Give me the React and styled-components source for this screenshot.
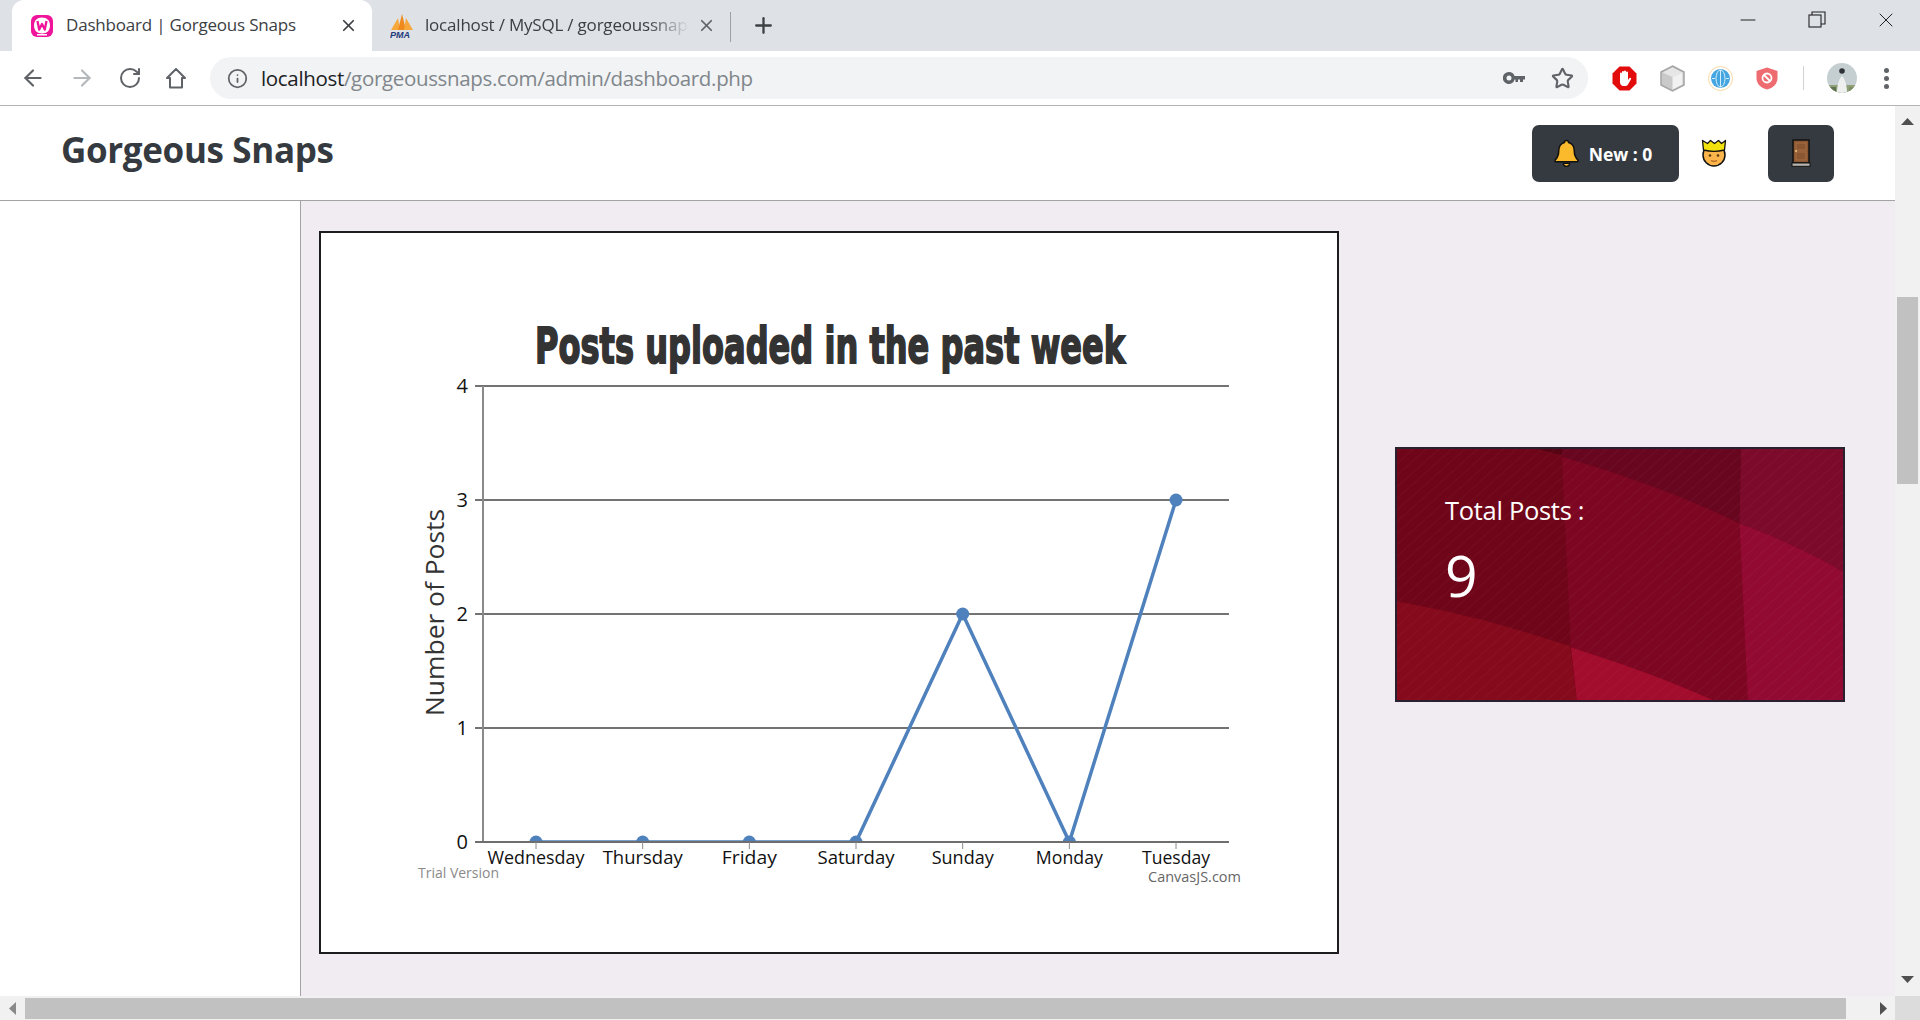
import React from "react";
import styled, { createGlobalStyle } from "styled-components";
import { ArrowLeft, ArrowRight, RotateCw, Info, Star, X, Plus, Minus } from "lucide-react";

const GlobalStyle = createGlobalStyle`
  html, body {
    margin: 0;
    padding: 0;
    height: 100%;
    overflow: hidden;
    font-family: "Open Sans", "Noto Sans", sans-serif;
  }
  * {
    box-sizing: border-box;
  }
`;

const Window = styled.div`
  width: 1920px;
  height: 1020px;
  display: flex;
  flex-direction: column;
  background: #ffffff;
  overflow: hidden;
`;

const TabStrip = styled.div`
  height: 51px;
  flex: none;
  display: flex;
  align-items: stretch;
  padding-left: 12px;
  background: #dee1e6;
`;

const ActiveTab = styled.div`
  width: 360px;
  display: flex;
  align-items: center;
  padding: 0 14px 0 18px;
  background: #ffffff;
  border-radius: 12px 12px 0 0;
`;

const Tab = styled.div`
  width: 358px;
  display: flex;
  align-items: center;
  padding: 0 14px 0 18px;
  position: relative;
`;

const TabTitle = styled.span`
  flex: 1;
  margin: -2px 0 0 ${(p) => (p.$faded ? 11 : 12)}px;
  font-size: 17px;
  letter-spacing: -0.2px;
  color: #3c4043;
  white-space: nowrap;
  overflow: hidden;
  ${(p) => p.$faded && "mask-image: linear-gradient(90deg, #000 82%, transparent 97%);"}
`;

const TabDivider = styled.div`
  width: 1px;
  height: 30px;
  margin-top: 12px;
  background: #9aa0a6;
`;

const NewTab = styled.div`
  width: 64px;
  display: flex;
  align-items: center;
  justify-content: center;
  color: #3c4043;
`;

const WindowControls = styled.div`
  margin-left: auto;
  display: flex;
  align-items: center;
  gap: 45px;
  padding: 0 22px 11px 0;
  color: #222222;
`;

const Toolbar = styled.div`
  height: 55px;
  flex: none;
  display: flex;
  align-items: center;
  border-bottom: 1px solid #b4b4b4;
  background: #ffffff;
`;

const NavIcons = styled.div`
  width: 210px;
  flex: none;
  display: flex;
  align-items: center;
  gap: 23px;
  padding-left: 20px;
  color: #5f6368;
`;

const UrlPill = styled.div`
  width: 1378px;
  height: 42px;
  flex: none;
  display: flex;
  align-items: center;
  padding: 0 14px 0 17px;
  border-radius: 21px;
  background: #f1f3f4;
  color: #5f6368;
`;

const UrlText = styled.span`
  flex: 1;
  margin-left: 13px;
  font-size: 20.5px;
  letter-spacing: -0.33px;
  color: #80868b;
  white-space: nowrap;
`;

const UrlHost = styled.span`
  color: #202124;
`;

const PillActions = styled.div`
  display: flex;
  align-items: center;
  gap: 26px;
`;

const Extensions = styled.div`
  flex: 1;
  display: flex;
  align-items: center;
  gap: 23px;
  padding-left: 24px;
`;

const ExtDivider = styled.div`
  width: 1px;
  height: 24px;
  margin-left: 2px;
  background: #d0d2d6;
`;

const Kebab = styled.div`
  display: flex;
  flex-direction: column;
  gap: 3px;
  margin-left: 4px;

  i {
    width: 5px;
    height: 5px;
    border-radius: 50%;
    background: #5f6368;
  }
`;

const Viewport = styled.div`
  flex: 1;
  min-height: 0;
  display: grid;
  grid-template-columns: 1895px 25px;
  grid-template-rows: 890px 24px;
`;

const Page = styled.div`
  display: flex;
  flex-direction: column;
  background: #f0ecf2;
  overflow: hidden;
`;

const SiteHeader = styled.header`
  height: 95px;
  flex: none;
  display: flex;
  align-items: center;
  padding: 0 61px 0 61px;
  background: #ffffff;
  border-bottom: 1px solid #a3a3a3;
`;

const Brand = styled.div`
  flex: 1;
  font-size: 35px;
  font-weight: 700;
  letter-spacing: -0.35px;
  color: #343a40;
  margin-top: -8px;
`;

const DarkButton = styled.div`
  height: 57px;
  display: flex;
  align-items: center;
  justify-content: center;
  gap: 10px;
  width: ${(p) => p.$width}px;
  padding-right: ${(p) => p.$nudge || 0}px;
  border-radius: 7px;
  background: #343a40;
  color: #ffffff;
  font-size: 17.5px;
  font-weight: 700;
`;

const NewLabel = styled.span`
  margin-top: 2px;
`;

const UserFace = styled.div`
  display: flex;
  margin: 0 41px 0 22px;
`;

const Body = styled.div`
  flex: 1;
  display: flex;
  min-height: 0;
`;

const Sidebar = styled.aside`
  width: 301px;
  flex: none;
  background: #ffffff;
  border-right: 1px solid #a3a3a3;
`;

const Content = styled.main`
  flex: 1;
  display: flex;
  align-items: flex-start;
  padding: 30px 0 0 18px;
  gap: 56px;
`;

const ChartCard = styled.section`
  width: 1020px;
  height: 723px;
  flex: none;
  padding-left: 1px;
  background: #ffffff;
  border: 2px solid #1d1d1f;
`;

const ChartSvg = styled.svg`
  display: block;
  font-family: "Open Sans", "Noto Sans", sans-serif;
`;

const StatCard = styled.section`
  width: 450px;
  height: 255px;
  flex: none;
  margin-top: 216px;
  padding: 43px 0 0 48px;
  border: 2px solid #2a2030;
  position: relative;
  overflow: hidden;
  color: #ffffff;
  background: #6e0518;
`;

const StatBackground = styled.svg`
  position: absolute;
  inset: 0;
  width: 100%;
  height: 100%;
`;

const StatLabel = styled.div`
  position: relative;
  font-size: 25.5px;
  line-height: 36px;
  letter-spacing: -0.3px;
`;

const StatValue = styled.div`
  position: relative;
  margin-top: 9px;
  font-size: 57px;
  line-height: 76px;
  font-weight: 400;
`;

const VScroll = styled.div`
  display: flex;
  flex-direction: column;
  align-items: center;
  background: #f1f1f1;
  padding: 10px 0 11px;
`;

const VThumb = styled.div`
  width: 21px;
  height: 187px;
  margin-top: 170px;
  background: #c1c1c1;
`;

const HScroll = styled.div`
  display: flex;
  align-items: stretch;
  background: #f1f1f1;
  padding: 2px 0 1px;
`;

const HArrow = styled.div`
  width: 25px;
  display: flex;
  align-items: center;
  justify-content: center;
  flex: none;
`;

const HThumb = styled.div`
  width: 1821px;
  background: #c1c1c1;
`;

const HEnd = styled.div`
  margin-left: auto;
  display: flex;
`;

const Corner = styled.div`
  background: #dcdcdc;
`;

const SpacerEnd = styled.div`
  margin-top: auto;
  display: flex;
`;

const Arrow = ({ dir }) => {
  const points = {
    up: "0,9 6.5,2 13,9",
    down: "0,2 13,2 6.5,9",
    left: "8,0 8,13 1,6.5",
    right: "2,0 2,13 9,6.5",
  }[dir];
  const fill = dir === "left" ? "#8a8a8a" : "#505050";
  return (
    <svg width={dir === "up" || dir === "down" ? 13 : 10} height={dir === "up" || dir === "down" ? 11 : 13} fill={fill}>
      <polygon points={points} />
    </svg>
  );
};

const WampIcon = () => (
  <svg width="24" height="24" viewBox="0 0 24 24">
    <path d="M7 1h10a6 6 0 0 1 6 6v10a6 6 0 0 1-6 6H7a6 6 0 0 1-6-6V7a6 6 0 0 1 6-6z" fill="#f0149a" />
    <path d="M12 3.500c5 0 8 3 8 8s-3 8-8 8-8-3-8-8 3-8 8-8z" fill="#ffffff" />
    <path d="M7.500 7l1.700 8.500L12 10l2.800 5.500L16.500 7" fill="none" stroke="#f0149a" strokeWidth="2.300" strokeLinejoin="round" />
    <rect x="7" y="20" width="10" height="1.500" fill="#ffffff" />
  </svg>
);

const PmaIcon = () => (
  <svg width="24" height="26" viewBox="0 0 24 26">
    <path d="M1 17 8 5l2 12z" fill="#f6a83c" />
    <path d="M8 17 12 1l4 16z" fill="#f08a1d" />
    <path d="M14 17 16 5l7 12z" fill="#f6a83c" />
    <text x="0" y="25" fontSize="9" fontWeight="700" fontStyle="italic" fill="#24397a" fontFamily="Liberation Sans, sans-serif">PMA</text>
  </svg>
);

const HomeIcon = () => (
  <svg width="22" height="22" viewBox="0 0 22 22" fill="none" stroke="#5f6368" strokeWidth="2">
    <path d="M11 2 2 11h3v9.500h12V11h3z" strokeLinejoin="round" />
  </svg>
);

const KeyIcon = () => (
  <svg width="22" height="12" viewBox="0 0 22 12" fill="#5f6368">
    <path d="M6 0a6 6 0 0 1 5.600 4H22v3.500h-2V10h-3V7.500h-2V10h-2.500V7.500h-.9A6 6 0 1 1 6 0zm0 3.500a2.500 2.500 0 1 0 0 5 2.500 2.500 0 0 0 0-5z" />
  </svg>
);

const AdblockIcon = () => (
  <svg width="25" height="25" viewBox="0 0 25 25">
    <polygon points="7.500,0.500 17.500,0.500 24.500,7.500 24.500,17.500 17.500,24.500 7.500,24.500 0.500,17.500 0.500,7.500" fill="#e20c0c" />
    <path d="M8 11V7.500a1 1 0 0 1 2 0V6a1 1 0 0 1 2 0v-.500a1 1 0 0 1 2 0V6.500a1 1 0 0 1 2 0V14l1.500-2a1 1 0 0 1 1.500 1.300l-3 5.200a3.500 3.500 0 0 1-3 1.500h-1.500C9.500 20 8 18.500 8 16z" fill="#ffffff" />
  </svg>
);

const CubeIcon = () => (
  <svg width="25" height="27" viewBox="0 0 25 27">
    <polygon points="12.500,1 24,7 24,20 12.500,26 1,20 1,7" fill="#c9c9c9" stroke="#a5a5a5" strokeWidth="1.500" />
    <polygon points="12.500,2.500 22.500,7.500 12.500,12 2.500,7.500" fill="#e6e6e6" />
    <polygon points="12.500,12 22.500,7.500 22.500,19.500 12.500,24.500" fill="#f1f1f1" />
  </svg>
);

const GlobeIcon = () => (
  <svg width="25" height="25" viewBox="0 0 25 25" fill="none">
    <circle cx="12.500" cy="12.500" r="12" stroke="#f6d9a5" />
    <circle cx="12.500" cy="12.500" r="9.500" fill="#44a5e0" />
    <ellipse cx="12.500" cy="12.500" rx="4.500" ry="8.500" stroke="#d6eefa" />
    <path d="M12.500 4v17" stroke="#d6eefa" />
    <path d="M4 12.500h3M18 12.500h3" stroke="#d6eefa" />
  </svg>
);

const ShieldIcon = () => (
  <svg width="22" height="23" viewBox="0 0 22 23">
    <path d="M11 .500 21.500 4v7c0 6-4.500 10-10.500 11.500C5 21 .500 17 .500 11V4z" fill="#ee6b6f" />
    <circle cx="11" cy="11" r="4.500" fill="none" stroke="#ffffff" strokeWidth="1.800" />
    <path d="M8 8l6 6" stroke="#ffffff" strokeWidth="1.800" />
  </svg>
);

const AvatarIcon = () => (
  <svg width="30" height="30" viewBox="0 0 30 30">
    <defs>
      <clipPath id="avatarClip">
        <circle cx="15" cy="15" r="15" />
      </clipPath>
    </defs>
    <g clipPath="url(#avatarClip)">
      <rect width="30" height="30" fill="#c5cfd2" />
      <rect y="22" width="30" height="8" fill="#8f9f78" />
      <path d="M10 30c0-8 2-14 5-17 3 3 5 9 5 17z" fill="#eef0f0" />
      <circle cx="15" cy="8" r="2.800" fill="#2f3138" />
      <rect x="3" y="24" width="6" height="6" fill="#5f7350" />
      <rect x="22" y="24" width="6" height="6" fill="#7d8f62" />
    </g>
  </svg>
);

const BellIcon = () => (
  <svg width="25" height="28" viewBox="0 0 24 27">
    <path d="M12 1.500c1.300 0 2 .800 2 1.800 3.600 1 5.500 4 5.500 8 0 5 1.500 7 3.500 9v1.700H1V20.300c2-2 3.500-4 3.500-9 0-4 1.900-7 5.500-8 0-1 .7-1.800 2-1.800z" fill="#fbb92c" stroke="#111" strokeWidth="1.500" strokeLinejoin="round" />
    <path d="M9 23.500h6a3 3 0 0 1-6 0z" fill="#fbb92c" stroke="#111" strokeWidth="1.200" />
  </svg>
);

const FaceIcon = () => (
  <svg width="26" height="28" viewBox="0 0 26 28">
    <ellipse cx="13" cy="16" rx="11" ry="11" fill="#fbb54a" stroke="#111" strokeWidth="1.500" />
    <path d="M1.500 1.500l5 3 3-3 4 3 4-3 3 3 4-3-1 9.500c-6 1.500-15 1.500-21 0z" fill="#f2e30f" stroke="#111" strokeWidth="1.300" strokeLinejoin="round" />
    <circle cx="9" cy="16.500" r="1.300" fill="#5b3a12" />
    <circle cx="17" cy="16.500" r="1.300" fill="#5b3a12" />
    <path d="M10 21.500c2 1.200 4 1.200 6 0" fill="none" stroke="#b5651d" strokeWidth="1.300" />
  </svg>
);

const DoorIcon = () => (
  <svg width="20" height="28" viewBox="0 0 20 28">
    <rect x="2" y="1" width="16" height="23" fill="#8b5732" stroke="#111" strokeWidth="1.500" />
    <rect x="5" y="4" width="10" height="7" fill="none" stroke="#a96f42" />
    <rect x="5" y="13" width="10" height="8" fill="none" stroke="#a96f42" />
    <circle cx="5" cy="12" r=".9" fill="#f2d48a" />
    <rect x="1" y="24" width="18" height="3.300" fill="#b9b5ae" stroke="#111" strokeWidth="1" />
  </svg>
);

const days = ["Wednesday", "Thursday", "Friday", "Saturday", "Sunday", "Monday", "Tuesday"];
const posts = [0, 0, 0, 0, 2, 0, 3];

// chart pixels, measured inside the card
const plotLeft = 161;
const plotRight = 907;
const plotBase = 609;
const yStep = 114;
const xFirst = 214;
const xStep = 106.67;

const xAt = (i) => xFirst + i * xStep;
const yAt = (v) => plotBase - v * yStep;

const dayWidths = [97, 80, 55, 77, 62, 67, 68];

const PostsChart = () => (
  <ChartSvg width="1015" height="718" viewBox="0 0 1015 718">
    <defs>
      <clipPath id="plotClip">
        <rect x={plotLeft} y="100" width={plotRight - plotLeft} height={plotBase - 100} />
      </clipPath>
    </defs>
    <text
      transform="translate(213 130) scale(0.7 1)"
      fontSize="50"
      fontWeight="700"
      fill="#333333"
      stroke="#333333"
      strokeWidth="1.900"
      textLength="843"
      lengthAdjust="spacingAndGlyphs"
      style={{ fontFamily: "DejaVu Sans, sans-serif" }}
    >
      Posts uploaded in the past week
    </text>

    {[1, 2, 3, 4].map((v) => (
      <line key={v} x1={plotLeft - 8} x2={plotRight} y1={yAt(v)} y2={yAt(v)} stroke="#737373" strokeWidth="2" />
    ))}
    <line x1={plotLeft} x2={plotLeft} y1={yAt(4)} y2={plotBase} stroke="#8a8a8a" strokeWidth="2" />

    {[0, 1, 2, 3, 4].map((v) => (
      <text key={v} x={plotLeft - 15} y={yAt(v) + 7} fontSize="20" fill="#111111" textAnchor="end">
        {v}
      </text>
    ))}

    <g clipPath="url(#plotClip)">
      <polyline
        points={posts.map((v, i) => `${xAt(i)},${yAt(v)}`).join(" ")}
        fill="none"
        stroke="#4f81bc"
        strokeWidth="3.500"
        strokeLinejoin="round"
      />
      {posts.map((v, i) => (
        <circle key={i} cx={xAt(i)} cy={yAt(v)} r="6.500" fill="#4f81bc" />
      ))}
    </g>

    <line x1={plotLeft - 8} x2={plotRight} y1={plotBase} y2={plotBase} stroke="#6e6e6e" strokeWidth="2" />
    {days.map((d, i) => (
      <g key={d}>
        <line x1={xAt(i)} x2={xAt(i)} y1={plotBase} y2={plotBase + 7} stroke="#8a8a8a" strokeWidth="1" />
        <text
          x={xAt(i) - dayWidths[i] / 2}
          y={plotBase + 22}
          fontSize="18.500"
          fill="#111111"
          textLength={dayWidths[i]}
          lengthAdjust="spacingAndGlyphs"
        >
          {d}
        </text>
      </g>
    ))}

    <text
      transform={`translate(122 ${(276 + 483) / 2}) rotate(-90)`}
      fontSize="26"
      fill="#333333"
      textAnchor="middle"
      textLength="207"
      lengthAdjust="spacingAndGlyphs"
    >
      Number of Posts
    </text>

    <text x="96" y="645" fontSize="14.500" fill="#8a8a8a" textLength="81" lengthAdjust="spacingAndGlyphs">
      Trial Version
    </text>
    <text x="826" y="649" fontSize="14.500" fill="#666666" textLength="93" lengthAdjust="spacingAndGlyphs">
      CanvasJS.com
    </text>
  </ChartSvg>
);

const StatPattern = () => (
  <StatBackground viewBox="48 55 1344 757" preserveAspectRatio="none">
    <defs>
      <pattern id="stripes" width="26" height="26" patternUnits="userSpaceOnUse" patternTransform="rotate(-42)">
        <rect width="26" height="3" fill="#ffffff" opacity="0.03" />
      </pattern>
    </defs>
    <rect x="48" y="55" width="1344" height="757" fill="#6f0519" />
    <path d="M470 55h75v18z" fill="#560414" />
    <path d="M48 515C250 550 420 600 570 650L590 812H48z" fill="#850a1c" />
    <path d="M545 55H1085L1080 280C900 190 720 130 545 78z" fill="#680620" />
    <path d="M545 78C720 130 900 190 1080 280L1105 812H1000C860 750 720 700 572 653z" fill="#7d0722" />
    <path d="M572 653C720 700 860 750 1000 812H590z" fill="#a20c2d" />
    <path d="M1085 55H1392V425C1300 370 1190 320 1080 280z" fill="#7c0a2b" />
    <path d="M1080 280C1190 320 1300 370 1392 425V812H1105z" fill="#920a32" />
    <rect x="48" y="55" width="1344" height="757" fill="url(#stripes)" />
  </StatBackground>
);

const App = () => (
  <Window>
    <GlobalStyle />
    <TabStrip>
      <ActiveTab>
        <WampIcon />
        <TabTitle>Dashboard | Gorgeous Snaps</TabTitle>
        <X size={19} color="#3c4043" strokeWidth={2.2} />
      </ActiveTab>
      <Tab>
        <PmaIcon />
        <TabTitle $faded>localhost / MySQL / gorgeoussnaps</TabTitle>
        <X size={19} color="#5f6368" strokeWidth={2.2} />
      </Tab>
      <TabDivider />
      <NewTab>
        <Plus size={25} strokeWidth={2.2} />
      </NewTab>
      <WindowControls>
        <Minus size={24} strokeWidth={1} />
        <svg width="24" height="24" viewBox="0 0 24 24" fill="none" stroke="#222" strokeWidth="1.100">
          <rect x="4" y="7" width="12" height="12" />
          <path d="M7 7V4h13v12h-4" />
        </svg>
        <X size={24} strokeWidth={1} />
      </WindowControls>
    </TabStrip>

    <Toolbar>
      <NavIcons>
        <ArrowLeft size={26} strokeWidth={2} />
        <ArrowRight size={26} strokeWidth={2} color="#b5b8bb" />
        <RotateCw size={24} strokeWidth={2} />
        <HomeIcon />
      </NavIcons>
      <UrlPill>
        <Info size={21} strokeWidth={2} />
        <UrlText>
          <UrlHost>localhost</UrlHost>/gorgeoussnaps.com/admin/dashboard.php
        </UrlText>
        <PillActions>
          <KeyIcon />
          <Star size={23} strokeWidth={2.2} />
        </PillActions>
      </UrlPill>
      <Extensions>
        <AdblockIcon />
        <CubeIcon />
        <GlobeIcon />
        <ShieldIcon />
        <ExtDivider />
        <AvatarIcon />
        <Kebab>
          <i />
          <i />
          <i />
        </Kebab>
      </Extensions>
    </Toolbar>

    <Viewport>
      <Page>
        <SiteHeader>
          <Brand>Gorgeous Snaps</Brand>
          <DarkButton $width={147} $nudge={5}>
            <BellIcon />
            <NewLabel>New : 0</NewLabel>
          </DarkButton>
          <UserFace>
            <FaceIcon />
          </UserFace>
          <DarkButton $width={66}>
            <DoorIcon />
          </DarkButton>
        </SiteHeader>
        <Body>
          <Sidebar />
          <Content>
            <ChartCard>
              <PostsChart />
            </ChartCard>
            <StatCard>
              <StatPattern />
              <StatLabel>Total Posts :</StatLabel>
              <StatValue>9</StatValue>
            </StatCard>
          </Content>
        </Body>
      </Page>
      <VScroll>
        <Arrow dir="up" />
        <VThumb />
        <SpacerEnd>
          <Arrow dir="down" />
        </SpacerEnd>
      </VScroll>
      <HScroll>
        <HArrow>
          <Arrow dir="left" />
        </HArrow>
        <HThumb />
        <HEnd>
          <HArrow>
            <Arrow dir="right" />
          </HArrow>
        </HEnd>
      </HScroll>
      <Corner />
    </Viewport>
  </Window>
);

export default App;
